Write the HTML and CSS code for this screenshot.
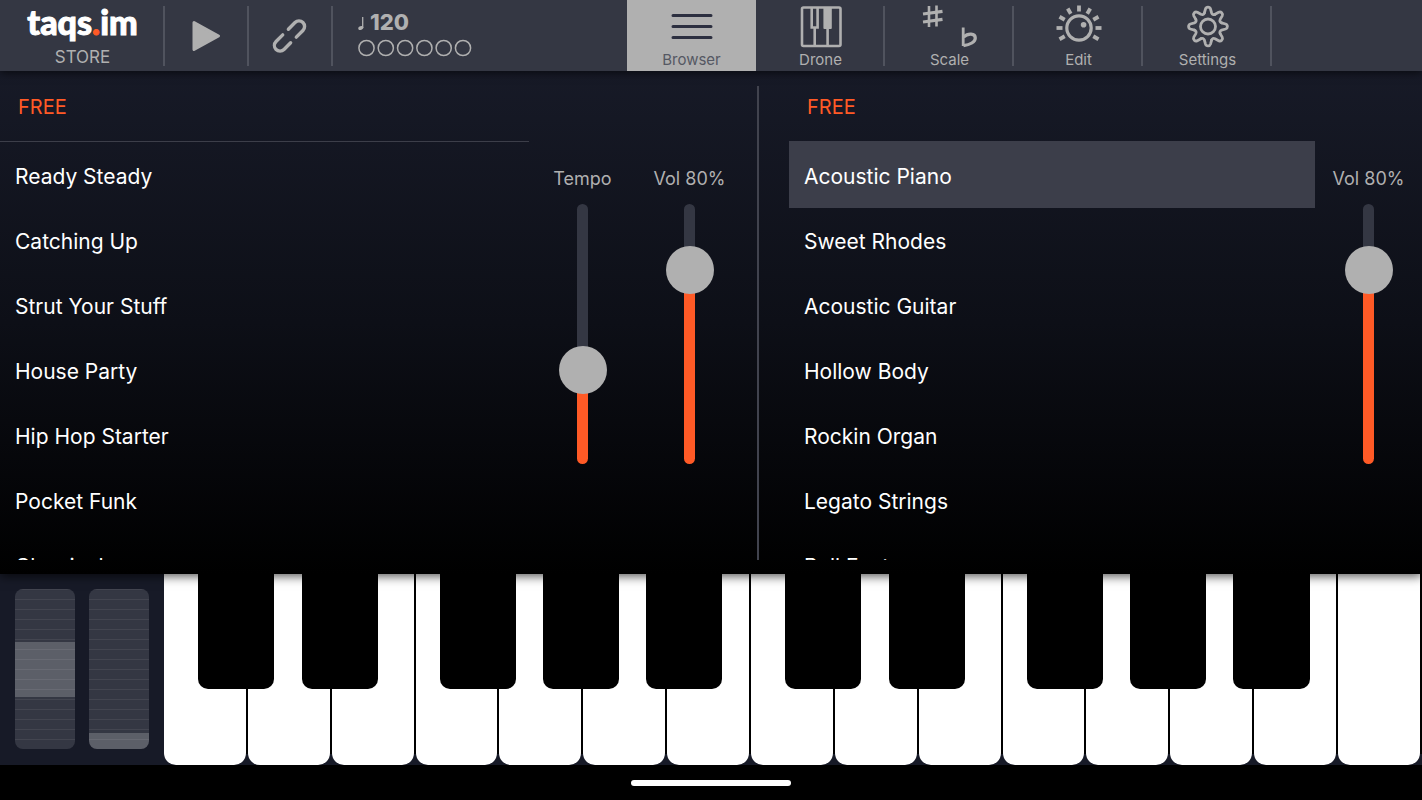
FILE: index.html
```html
<!DOCTYPE html>
<html lang="en">
<head>
    <meta charset="UTF-8">
    <title>taqs.im</title>
    <link rel="stylesheet" href="styles.css">
</head>
<body>
    <!-- Toolbar -->
    <header class="toolbar">
        <a class="brand cell" href="#store">
            <span class="logo">taqs<span class="logo-dot">.</span>im</span>
            <span class="store">STORE</span>
        </a>
        <button class="cell" aria-label="Play">
            <svg width="40" height="40" viewBox="-19 -20 40 40">
                <path d="M-12-13.500L12.500 0L-12 13.500Z" fill="currentColor" stroke="currentColor" stroke-width="3" stroke-linejoin="round"/>
            </svg>
        </button>
        <button class="cell" aria-label="Link">
            <svg width="44" height="44" viewBox="-20.500 -22 44 44">
                <g transform="rotate(-45)" fill="none" stroke="currentColor" stroke-width="3.400" stroke-linecap="round">
                    <path d="M4-5.600H13.400a5.600 5.600 0 0 1 0 11.200H4"/>
                    <path d="M-4-5.600H-13.400a5.600 5.600 0 0 0 0 11.200H-4"/>
                </g>
            </svg>
        </button>
        <div class="tempo">
            <div class="bpm">
                <svg width="8" height="16" viewBox="0 0 8 16">
                    <ellipse cx="2.800" cy="13" rx="2.600" ry="1.900" transform="rotate(-20 2.800 13)" fill="currentColor"/>
                    <path d="M4.700 13V2" stroke="currentColor" stroke-width="1.300"/>
                </svg>
                <span>120</span>
            </div>
            <svg class="beats" viewBox="0 0 114 18">
                <g fill="none" stroke="currentColor" stroke-width="1.500">
                    <circle cx="8.500" cy="9" r="7.600"/>
                    <circle cx="27.800" cy="9" r="7.600"/>
                    <circle cx="47.100" cy="9" r="7.600"/>
                    <circle cx="66.400" cy="9" r="7.600"/>
                    <circle cx="85.700" cy="9" r="7.600"/>
                    <circle cx="105" cy="9" r="7.600"/>
                </g>
            </svg>
        </div>
        <nav class="tabs">
            <button class="tab cell active">
                <svg class="icon" viewBox="-30 -22 60 44">
                    <path d="M-19-10.500H19M-19 .500H19M-19 11.500H19" fill="none" stroke="#2c2f40" stroke-width="3" stroke-linecap="round"/>
                </svg>
                Browser
            </button>
            <button class="tab cell">
                <svg class="icon" viewBox="-30 -22 60 44">
                    <g fill="none" stroke="currentColor" stroke-width="2.600">
                        <rect x="-19" y="-18.500" width="38.500" height="38.500" rx="1.500"/>
                        <path d="M-9.300-18V1.500H-3.400V-18M-6.300 2V19M6.600 2V19"/>
                    </g>
                    <path d="M2.400-18H10.800V2a1 1 0 0 1-1 1H3.400a1 1 0 0 1-1-1Z" fill="currentColor"/>
                </svg>
                Drone
            </button>
            <button class="tab cell">
                <svg class="icon" viewBox="-30 -22 60 44">
                    <g fill="none" stroke="currentColor">
                        <path d="M-21-20V1M-13.500-20.500V.500" stroke-width="2.600"/>
                        <path d="M-27-12L-7.500-14.600M-27-4L-7.500-6.600" stroke-width="3.200"/>
                        <path d="M13.200 1.500V20" stroke-width="2.800"/>
                        <path d="M13.500 11C18 6.800 25.300 7 25.300 12C25.300 16 20 18.800 13.500 19.600" stroke-width="3.200"/>
                    </g>
                </svg>
                Scale
            </button>
            <button class="tab cell">
                <svg class="icon" viewBox="-30 -22 60 44">
                    <g transform="translate(0 2)">
                        <circle r="12.200" fill="none" stroke="currentColor" stroke-width="3.200"/>
                        <circle cx="4.600" cy="-3.200" r="2.800" fill="currentColor"/>
                        <g stroke="currentColor" stroke-width="3.800">
                            <path d="M0-16.500V-22.500"/>
                            <path d="M0-16.500V-22.500" transform="rotate(30)"/>
                            <path d="M0-16.500V-22.500" transform="rotate(60)"/>
                            <path d="M0-16.500V-22.500" transform="rotate(90)"/>
                            <path d="M0-16.500V-22.500" transform="rotate(120)"/>
                            <path d="M0-16.500V-22.500" transform="rotate(-30)"/>
                            <path d="M0-16.500V-22.500" transform="rotate(-60)"/>
                            <path d="M0-16.500V-22.500" transform="rotate(-90)"/>
                            <path d="M0-16.500V-22.500" transform="rotate(-120)"/>
                        </g>
                    </g>
                </svg>
                Edit
            </button>
            <button class="tab cell">
                <svg class="icon" viewBox="-30 -22 60 44">
                    <g transform="translate(0 .500)" fill="none" stroke="currentColor" stroke-width="2.800" stroke-linecap="round" stroke-linejoin="round">
                        <path id="tooth" d="M-3.600-13.600L-2.500-17.600Q-1.900-19.400 0-19.400Q1.900-19.400 2.500-17.600L3.600-13.600Q4.600-11.100 7.070-12.160"/>
                        <use href="#tooth" transform="rotate(45)"/>
                        <use href="#tooth" transform="rotate(90)"/>
                        <use href="#tooth" transform="rotate(135)"/>
                        <use href="#tooth" transform="rotate(180)"/>
                        <use href="#tooth" transform="rotate(225)"/>
                        <use href="#tooth" transform="rotate(270)"/>
                        <use href="#tooth" transform="rotate(315)"/>
                        <circle r="7.500"/>
                    </g>
                </svg>
                Settings
            </button>
        </nav>
    </header>

    <!-- Browser -->
    <main class="browser">
        <section class="panel">
            <div class="list">
                <h2 class="category ruled">FREE</h2>
                <ul class="items">
                    <li><button class="item">Ready Steady</button></li>
                    <li><button class="item">Catching Up</button></li>
                    <li><button class="item">Strut Your Stuff</button></li>
                    <li><button class="item">House Party</button></li>
                    <li><button class="item">Hip Hop Starter</button></li>
                    <li><button class="item">Pocket Funk</button></li>
                    <li><button class="item">Classical</button></li>
                </ul>
            </div>
            <div class="faders">
                <label class="fader">
                    Tempo
                    <input class="slider" type="range" min="0" max="100" value="33">
                </label>
                <label class="fader">
                    Vol 80%
                    <input class="slider" type="range" min="0" max="100" value="80">
                </label>
            </div>
        </section>
        <section class="panel sounds">
            <div class="list">
                <h2 class="category">FREE</h2>
                <ul class="items">
                    <li><button class="item selected">Acoustic Piano</button></li>
                    <li><button class="item">Sweet Rhodes</button></li>
                    <li><button class="item">Acoustic Guitar</button></li>
                    <li><button class="item">Hollow Body</button></li>
                    <li><button class="item">Rockin Organ</button></li>
                    <li><button class="item">Legato Strings</button></li>
                    <li><button class="item">Bell Fantasy</button></li>
                </ul>
            </div>
            <div class="faders">
                <label class="fader">
                    Vol 80%
                    <input class="slider" type="range" min="0" max="100" value="80">
                </label>
            </div>
        </section>
    </main>

    <!-- Wheels and keys -->
    <section class="keyboard">
        <div class="wheels">
            <input class="wheel pitch" type="range" min="-50" max="50" value="0" aria-label="Pitch bend">
            <input class="wheel mod" type="range" min="0" max="100" value="0" aria-label="Modulation">
        </div>
        <div class="keys">
            <div class="note"><button class="white" aria-label="C3"></button><button class="black c-sharp" aria-label="C#3"></button></div>
            <div class="note"><button class="white" aria-label="D3"></button><button class="black d-sharp" aria-label="D#3"></button></div>
            <div class="note"><button class="white" aria-label="E3"></button></div>
            <div class="note"><button class="white" aria-label="F3"></button><button class="black f-sharp" aria-label="F#3"></button></div>
            <div class="note"><button class="white" aria-label="G3"></button><button class="black g-sharp" aria-label="G#3"></button></div>
            <div class="note"><button class="white" aria-label="A3"></button><button class="black a-sharp" aria-label="A#3"></button></div>
            <div class="note"><button class="white" aria-label="B3"></button></div>
            <div class="note"><button class="white" aria-label="C4"></button><button class="black c-sharp" aria-label="C#4"></button></div>
            <div class="note"><button class="white" aria-label="D4"></button><button class="black d-sharp" aria-label="D#4"></button></div>
            <div class="note"><button class="white" aria-label="E4"></button></div>
            <div class="note"><button class="white" aria-label="F4"></button><button class="black f-sharp" aria-label="F#4"></button></div>
            <div class="note"><button class="white" aria-label="G4"></button><button class="black g-sharp" aria-label="G#4"></button></div>
            <div class="note"><button class="white" aria-label="A4"></button><button class="black a-sharp" aria-label="A#4"></button></div>
            <div class="note"><button class="white" aria-label="B4"></button></div>
            <div class="note"><button class="white" aria-label="C5"></button></div>
        </div>
    </section>

    <footer class="home"><span class="home-bar"></span></footer>

    <script>
        // Fill the track below the thumb
        document.querySelectorAll(".slider").forEach((slider) => {
            const update = () => slider.style.setProperty("--level", `${slider.value}%`);
            slider.addEventListener("input", update);
            update();
        });
    </script>
</body>
</html>
```
FILE: styles.css
```css
* {
    box-sizing: border-box;
}

body {
    display: flex;
    flex-direction: column;
    height: 100vh;
    margin: 0;
    background: #000;
    color: #b0b0b0;
    font-family: Inter, "Liberation Sans", sans-serif;
    overflow: hidden;
}

button {
    padding: 0;
    border: 0;
    background: none;
    color: inherit;
    font: inherit;
    cursor: pointer;
}

/* Toolbar */
.toolbar {
    position: relative;
    z-index: 2;
    display: grid;
    grid-template-columns: 165px 84px 84px 1fr auto;
    height: 71px;
    padding-right: 150px;
    background: #343743;
    box-shadow: 0 2px 8px rgba(0, 0, 0, 0.6);
}

.cell {
    display: flex;
    align-items: center;
    justify-content: center;
    background: linear-gradient(#50535e, #50535e) right 6px / 2px 60px no-repeat;
}

.brand {
    flex-direction: column;
    color: #b0b0b0;
    text-decoration: none;
}

.logo {
    color: #fff;
    font-family: Lato, sans-serif;
    font-size: 34px;
    font-weight: 900;
    line-height: 43px;
    -webkit-text-stroke: 1px currentColor;
}

.logo-dot {
    color: #ff5a26;
}

.store {
    font-size: 17px;
    line-height: 28px;
}

.tempo {
    display: flex;
    flex-direction: column;
    padding: 10px 25px;
}

.bpm {
    display: flex;
    align-items: center;
    gap: 4px;
    font-size: 22px;
    font-weight: 800;
    line-height: 25px;
}

.beats {
    width: 114px;
    height: 18px;
    margin-top: 4px;
}

.tabs {
    display: flex;
}

.tab {
    flex-direction: column;
    justify-content: flex-start;
    gap: 2px;
    width: 129px;
    padding-top: 4px;
    font-size: 15px;
    line-height: 19px;
}

.tab.active {
    background: #b0b0b0;
    color: #555863;
}

.icon {
    width: 60px;
    height: 44px;
}

/* Browser */
.browser {
    position: relative;
    z-index: 1;
    display: grid;
    grid-template-columns: 759fr 663fr;
    flex: 1;
    min-height: 0;
    padding-bottom: 14px;
    background: linear-gradient(#171a27, #0d0f17 50%, #000);
    box-shadow: 0 2px 10px rgba(0, 0, 0, 0.7);
}

.panel {
    display: flex;
    min-height: 0;
    padding-right: 16px;
    background: linear-gradient(#41434e, #41434e) right 15px / 2px 100% no-repeat;
}

.panel.sounds {
    padding: 0 0 0 30px;
    background: none;
}

.list {
    flex: 1;
    overflow: hidden;
}

.category {
    height: 71px;
    margin: 0;
    padding: 0 18px;
    border-bottom: 1px solid transparent;
    color: #ff5a26;
    font-size: 20px;
    font-weight: 400;
    line-height: 72px;
}

.category.ruled {
    border-color: #3c3e49;
}

.items {
    margin: 0;
    padding: 0;
    list-style: none;
}

.item {
    width: 100%;
    height: 65px;
    padding: 3px 15px 0;
    color: #fff;
    font-size: 21px;
    text-align: left;
}

.item.selected {
    background: #3c3e4a;
    box-shadow: 0 0 0 1px #3c3e4a;
}

.faders {
    display: flex;
    padding-top: 95px;
}

.fader {
    display: flex;
    flex-direction: column;
    align-items: center;
    gap: 12px;
    width: 107px;
    font-size: 18px;
    line-height: 26px;
}

.slider {
    appearance: none;
    width: 48px;
    height: 260px;
    margin: 0;
    background: none;
    writing-mode: vertical-lr;
    direction: rtl;
}

.slider::-webkit-slider-runnable-track {
    width: 11px;
    margin: 0 auto;
    border-radius: 6px;
    background: linear-gradient(to top, #ff5a26 var(--level), #343743 var(--level));
}

.slider::-webkit-slider-thumb {
    appearance: none;
    width: 48px;
    height: 48px;
    margin-left: -18px;
    border-radius: 50%;
    background: #b0b0b0;
}

/* Keyboard */
.keyboard {
    display: flex;
    height: 191px;
    background: #171a27;
}

.wheels {
    display: flex;
    gap: 14px;
    padding: 15px 15px 0;
}

.wheel {
    appearance: none;
    width: 60px;
    height: 160px;
    margin: 0;
    border-radius: 8px;
    background: repeating-linear-gradient(#434550 0 1px, #343743 1px 10px);
    overflow: hidden;
    writing-mode: vertical-lr;
    direction: rtl;
}

.wheel::-webkit-slider-thumb {
    appearance: none;
    width: 60px;
    height: 55px;
    background: rgba(255, 255, 255, 0.2);
}

.wheel.mod::-webkit-slider-thumb {
    height: 16px;
}

.keys {
    display: flex;
    flex: 1;
}

.note {
    position: relative;
    flex: 1;
    padding-right: 2px;
    background: linear-gradient(#000, #000) right top / 2px 180px no-repeat;
}

.white {
    display: block;
    width: 100%;
    height: 100%;
    border-radius: 0 0 12px 12px;
    background: #fff;
}

/* Black keys lie over the gap between two white ones */
.black {
    position: absolute;
    z-index: 1;
    top: 0;
    width: 91%;
    height: 60%;
    border-radius: 0 0 10px 10px;
    background: #000;
}

.c-sharp {
    left: 40%;
}

.d-sharp {
    left: 64%;
}

.f-sharp {
    left: 29%;
}

.g-sharp {
    left: 52%;
}

.a-sharp {
    left: 75%;
}

/* Home indicator */
.home {
    display: flex;
    justify-content: center;
    align-items: center;
    height: 35px;
}

.home-bar {
    width: 160px;
    height: 6px;
    border-radius: 3px;
    background: #fff;
}
```
